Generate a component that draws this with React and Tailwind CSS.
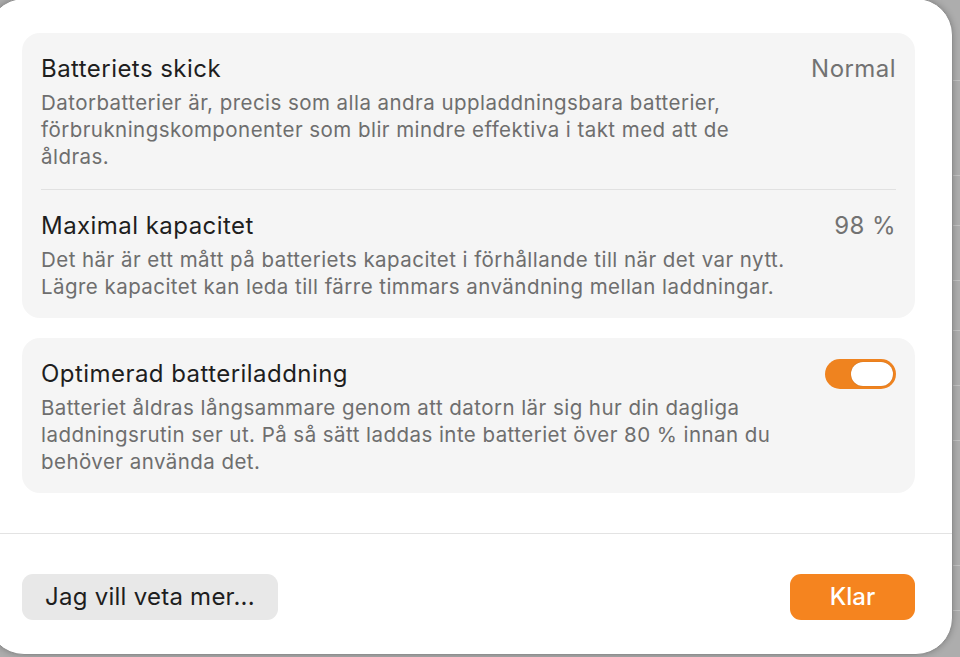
import React, { useState } from "react";

const font = { fontFamily: "Inter, 'Noto Sans', sans-serif" };

const Row = ({ title, value, children, right }) => (
  <div>
    <div className="flex items-center justify-between h-[28px]">
      <h3 className="text-[24px] leading-[28px] tracking-[0.45px] text-[#1e1e1e]">{title}</h3>
      {value ? (
        <span className="text-[24px] leading-[28px] tracking-[0.45px] text-[#727272]">{value}</span>
      ) : null}
      {right}
    </div>
    <p className="mt-[5.5px] text-[20.5px] leading-[27px] tracking-[0.45px] text-[#6e6e6e] whitespace-nowrap">
      {children}
    </p>
  </div>
);

const Toggle = ({ on, onChange }) => (
  <button
    onClick={() => onChange(!on)}
    className={`w-[71px] h-[30px] rounded-full p-[3px] flex items-center ${
      on ? "bg-[#ef831f] justify-end" : "bg-[#dcdcdc] justify-start"
    }`}
  >
    <span className="block w-[42px] h-[24px] rounded-full bg-white shadow-[0_0_1px_rgba(0,0,0,0.3)]" />
  </button>
);

export default function App() {
  const [optimized, setOptimized] = useState(true);

  return (
    <div
      className="w-[960px] h-[657px] overflow-hidden bg-[#adadad] relative"
      style={font}
    >
      {/* faint window content behind the sheet */}
      <div className="absolute right-0 top-0 w-[10px] h-full">
        {[80, 175, 225, 280, 330, 385, 440, 565, 610].map((t) => (
          <div key={t} className="absolute left-0 right-0 h-px bg-[#c2c2c2]" style={{ top: t }} />
        ))}
      </div>

      <div className="ml-[-13px] mt-[-2px] w-[966px] h-[657px] rounded-[37px] bg-white border border-[#8f8f8f] shadow-[0_0_6px_rgba(0,0,0,0.25)] flex flex-col relative">
        <div className="pl-[34px] pr-[37px] pt-[34px] flex flex-col gap-[20px]">
          <section className="bg-[#f5f5f5] rounded-[18px] px-[19px] pt-[22px] pb-[18.5px]">
            <Row title="Batteriets skick" value="Normal">
              Datorbatterier är, precis som alla andra uppladdningsbara batterier,
              <br />
              förbrukningskomponenter som blir mindre effektiva i takt med att de
              <br />
              åldras.
            </Row>
            <div className="h-px bg-[#e1e1e1] mt-[19.5px] mb-[22px]" />
            <Row title="Maximal kapacitet" value="98 %">
              Det här är ett mått på batteriets kapacitet i förhållande till när det var nytt.
              <br />
              Lägre kapacitet kan leda till färre timmars användning mellan laddningar.
            </Row>
          </section>

          <section className="bg-[#f5f5f5] rounded-[18px] px-[19px] pt-[22px] pb-[18.5px]">
            <Row
              title="Optimerad batteriladdning"
              right={<Toggle on={optimized} onChange={setOptimized} />}
            >
              Batteriet åldras långsammare genom att datorn lär sig hur din dagliga
              <br />
              laddningsrutin ser ut. På så sätt laddas inte batteriet över 80 % innan du
              <br />
              behöver använda det.
            </Row>
          </section>
        </div>

        <div className="mt-[40px] h-px bg-[#e3e3e3]" />

        <div className="pl-[34px] pr-[37px] pt-[40px] flex items-center justify-between">
          <button className="h-[46px] w-[256px] rounded-[11px] bg-[#e8e8e8] text-[24px] tracking-[0.25px] text-[#1e1e1e]">
            Jag vill veta mer...
          </button>
          <button className="h-[46px] w-[125px] rounded-[11px] bg-[#f5841f] text-[24px] font-medium text-white">
            Klar
          </button>
        </div>
      </div>
    </div>
  );
}
